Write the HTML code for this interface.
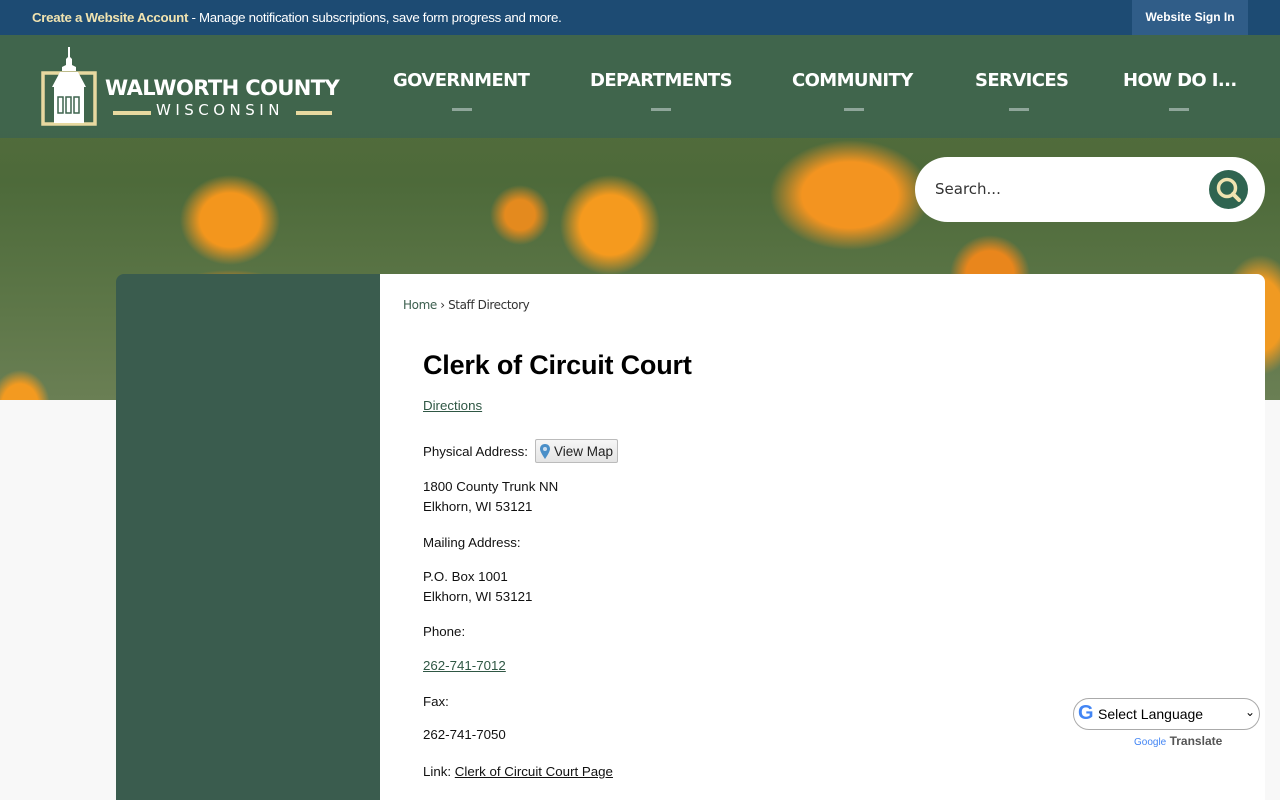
<!DOCTYPE html>
<html><head><meta charset="utf-8"><style>
*{margin:0;padding:0;box-sizing:border-box}
body{width:1280px;height:800px;overflow:hidden;background:#f8f8f8;font-family:"Liberation Sans",Arial,sans-serif;position:relative}
.top{position:absolute;left:0;top:0;width:1280px;height:35px;background:#1d4b73;color:#fff;font-size:13.3px}
.top .msg{position:absolute;left:32px;top:10px;letter-spacing:-0.3px}
.top b{color:#f0e3b0}
.top .sign{position:absolute;left:1132px;top:0;width:116px;height:35px;background:#305d88;font-size:12px;font-weight:bold;text-align:center;line-height:35px}
.hero{position:absolute;left:0;top:35px;width:1280px;height:365px;overflow:hidden;
background:
radial-gradient(ellipse 50px 45px at 230px 185px,#f3961d 60%,transparent 100%),
radial-gradient(ellipse 70px 30px at 230px 265px,#e8821a 60%,transparent 100%),
radial-gradient(ellipse 50px 50px at 610px 190px,#f59a1e 60%,transparent 100%),
radial-gradient(ellipse 80px 55px at 850px 160px,#f39420 60%,transparent 100%),
radial-gradient(ellipse 30px 35px at 20px 370px,#f39a20 60%,transparent 100%),
radial-gradient(ellipse 40px 40px at 990px 240px,#e9861c 60%,transparent 100%),
radial-gradient(ellipse 40px 60px at 1260px 280px,#f09a22 60%,transparent 100%),
radial-gradient(ellipse 30px 30px at 520px 180px,#e48a1e 50%,transparent 100%),
linear-gradient(180deg,#5a6f3e 0%,#4d6a3a 40%,#5b7546 70%,#6a7f54 100%);}
.nav{position:absolute;left:0;top:35px;width:1280px;height:103px;background:rgba(62,100,78,0.93)}
.nav a{position:absolute;top:35px;color:#fff;font-family:"DejaVu Sans",sans-serif;font-weight:bold;font-size:18px;letter-spacing:-0.6px;text-decoration:none}
.nav i{position:absolute;top:73px;width:20px;height:3px;background:#8fa69a}
.logo-t{position:absolute;left:105px;color:#fff;font-family:"DejaVu Sans",sans-serif;font-weight:bold;font-size:21px;letter-spacing:-0.6px}
.logo-s{position:absolute;left:156px;color:#fff;font-family:"DejaVu Sans",sans-serif;font-size:15px;letter-spacing:4.5px}
.search{position:absolute;left:915px;top:157px;width:350px;height:65px;background:#fff;border-radius:33px}
.search span{position:absolute;left:20px;top:23px;font-family:"DejaVu Sans",sans-serif;font-size:15px;color:#333}
.search .btn{position:absolute;left:294px;top:13px;width:39px;height:39px;border-radius:50%;background:#2f6450}
.side{position:absolute;left:116px;top:274px;width:264px;height:526px;background:#3a5c4e;border-top-left-radius:8px}
.main{position:absolute;left:380px;top:274px;width:885px;height:526px;background:#fff;border-top-right-radius:8px}
.c{position:absolute;font-size:13.3px;color:#111}
a.l{color:#2f5744;text-decoration:underline}
</style></head><body>
<div class="hero"></div>
<div class="top"><div class="msg"><b>Create a Website Account</b> - Manage notification subscriptions, save form progress and more.</div><div class="sign">Website Sign In</div></div>
<div class="nav">
<svg style="position:absolute;left:40px;top:10px" width="58" height="82" viewBox="0 0 58 82">
<rect x="3" y="28" width="52" height="51" fill="none" stroke="#e8d9a0" stroke-width="3.5"/>
<path d="M28 2 L30 2 L30 12 L32 14 L32 20 L36 22 L36 26 L22 26 L22 22 L26 20 L26 14 L28 12Z" fill="#fff"/>
<path d="M20 27 L38 27 L46 42 L12 42Z" fill="#fff"/>
<rect x="14" y="42" width="30" height="36" fill="#fff"/>
<path d="M18 52h5v16h-5zM26 52h5v16h-5zM34 52h5v16h-5z" fill="none" stroke="#3e644e" stroke-width="1.5"/>
</svg>
<div class="logo-t" style="top:41px">WALWORTH COUNTY</div>
<div style="position:absolute;left:113px;top:76px;width:38px;height:4px;background:#e8d9a0"></div>
<div style="position:absolute;left:296px;top:76px;width:36px;height:4px;background:#e8d9a0"></div>
<div class="logo-s" style="top:66px">WISCONSIN</div>
<a style="left:393px">GOVERNMENT</a><i style="left:452px"></i>
<a style="left:590px">DEPARTMENTS</a><i style="left:651px"></i>
<a style="left:792px">COMMUNITY</a><i style="left:844px"></i>
<a style="left:975px">SERVICES</a><i style="left:1009px"></i>
<a style="left:1123px">HOW DO I...</a><i style="left:1169px"></i>
</div>
<div class="search"><span>Search...</span><div class="btn"><svg width="39" height="39" viewBox="0 0 39 39"><circle cx="18" cy="18" r="8.5" fill="none" stroke="#f0e3b0" stroke-width="3.5"/><path d="M24 24l6 6" stroke="#f0e3b0" stroke-width="4" stroke-linecap="round"/></svg></div></div>
<div class="side"></div>
<div class="main"></div>
<div class="c" style="left:403px;top:298px;font-family:'DejaVu Sans',sans-serif;font-size:12px;color:#333;letter-spacing:-0.4px"><span style="color:#3b5e4e">Home</span> › Staff Directory</div>
<div class="c" style="left:423px;top:350px;font-size:27px;font-weight:bold;color:#000;letter-spacing:-0.2px">Clerk of Circuit Court</div>
<div class="c" style="left:423px;top:398px"><a class="l">Directions</a></div>
<div class="c" style="left:423px;top:444px">Physical Address:</div>
<div style="position:absolute;left:535px;top:439px;width:83px;height:24px;border:1px solid #bbb;border-radius:2px;background:linear-gradient(#f6f6f6,#e4e4e4);font-size:13.5px;padding:4px 0 0 18px;color:#222">View Map
<svg style="position:absolute;left:4px;top:4px" width="10" height="15" viewBox="0 0 10 15"><path d="M5 0C2 0 0 2 0 5c0 3 5 10 5 10s5-7 5-10C10 2 8 0 5 0z" fill="#4a8fc8"/><circle cx="5" cy="5" r="2" fill="#cde"/></svg></div>
<div class="c" style="left:423px;top:477px;line-height:20px">1800 County Trunk NN<br>Elkhorn, WI 53121</div>
<div class="c" style="left:423px;top:535px">Mailing Address:</div>
<div class="c" style="left:423px;top:567px;line-height:20px">P.O. Box 1001<br>Elkhorn, WI 53121</div>
<div class="c" style="left:423px;top:624px">Phone:</div>
<div class="c" style="left:423px;top:658px"><a class="l">262-741-7012</a></div>
<div class="c" style="left:423px;top:694px">Fax:</div>
<div class="c" style="left:423px;top:727px">262-741-7050</div>
<div class="c" style="left:423px;top:764px">Link: <a style="color:#111;text-decoration:underline">Clerk of Circuit Court Page</a></div>
<div style="position:absolute;left:1073px;top:698px;width:187px;height:32px;border:1px solid #aaa;border-radius:16px;background:#fff;font-size:14px;padding:7px 0 0 24px;color:#000">Select Language<span style="position:absolute;right:4px;top:6px;font-size:12px">&#8964;</span>
<span style="position:absolute;left:4px;top:3px;font-size:20px;font-weight:bold;color:#4285f4">G</span></div>
<div style="position:absolute;left:1134px;top:734px;font-size:12px;color:#555"><span style="font-size:10px;color:#4285f4">Google</span> <b>Translate</b></div>
</body></html>
